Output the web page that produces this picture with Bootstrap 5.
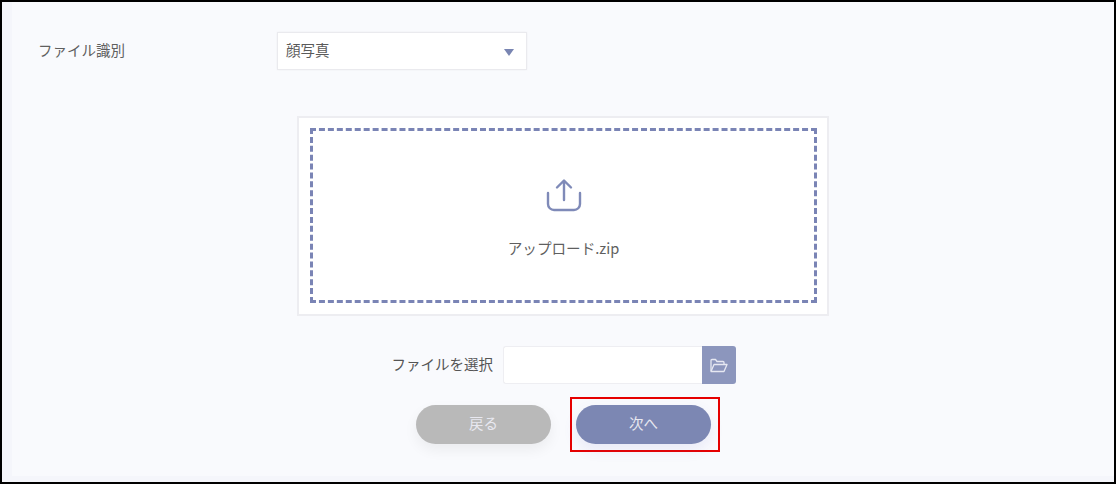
<!DOCTYPE html>
<html lang="ja">
<head>
<meta charset="utf-8">
<title>ファイル識別</title>
<link href="https://cdn.jsdelivr.net/npm/bootstrap@5.3.0/dist/css/bootstrap.min.css" rel="stylesheet">
<style>
html,body{margin:0;height:484px;overflow:hidden;background:#000}
body{font-family:"Noto Sans CJK JP","Noto Sans",sans-serif;color:#555;font-size:14.5px}
.shot-frame{height:484px;border:2px solid #000;background:#f9fafd;position:relative;overflow:hidden;box-shadow:inset 10px 0 0 #f5f6fb,inset 0 -6px 0 #f5f6fb}
.type-row{padding:30px 0 0 36px;height:114px}
.type-label{width:239px;line-height:36px;font-size:14.5px;color:#5f5f5f}
.type-select{width:250px;height:38px;background:#fff;border:1px solid #eaeaee;box-shadow:0 0 2px rgba(0,0,0,.05);padding:0 8px;font-size:14.5px;color:#5a5a5a}
.type-select>span:first-child{line-height:32px;height:34px}
.type-caret{width:0;height:0;border-left:5px solid transparent;border-right:5px solid transparent;border-top:7px solid #7985b2;margin:2px 4px 0 0}
.drop-outer{width:532px;height:200px;margin-left:295px;background:#fff;border:2px solid #ededf1;padding:10px 10px 11px 11px}
.drop-inner{height:100%;border:3.500px dashed #7a84b5;padding-top:47px;text-align:center}
.drop-name{margin-top:25px;font-size:14.6px;line-height:21px;color:#5f5f5f}
.file-row{margin-top:30px;height:38px;margin-left:389px}
.file-label{width:102px;font-size:14.5px;line-height:35px;color:#555}
.file-input{width:199px;height:38px;margin-left:10px;background:#fff;border:1px solid #eeeef2;border-right:0;border-radius:3px 0 0 3px}
.file-btn{width:34px;height:38px;background:#8c96bd;border-radius:0 3px 3px 0;padding:0}
.btn-row{margin:13px 0 0 414px}
.pill-btn{width:135px;height:39px;border-radius:20px;color:#e8e8f0;font-size:14.500px;line-height:36px;padding:0;border:0;text-align:center}
.pill-back{margin-top:8px;background:#b9b9b9;box-shadow:0 6px 14px rgba(0,0,0,.06)}
.pill-next{background:#7c87b3;box-shadow:0 6px 14px rgba(100,100,200,.1)}
.red-mark{margin-left:19px;width:150px;height:55px;border:2px solid #e60000;padding:6px 0 0 4px}
</style>
</head>
<body>
<div class="shot-frame">
  <div class="type-row d-flex align-items-start">
    <div class="type-label">ファイル識別</div>
    <div class="type-select d-flex justify-content-between align-items-center">
      <span>顔写真</span><span class="type-caret"></span>
    </div>
  </div>
  <div class="drop-outer">
    <div class="drop-inner">
      <svg width="36" height="34" viewBox="0 0 36 34" fill="none" stroke="#7f8ab8" stroke-width="2.4" stroke-linecap="round" stroke-linejoin="round" class="d-block mx-auto" aria-hidden="true">
        <path d="M18 22V3M11 9.500 18 2.500l7 7"/>
        <path d="M2 15v11a6 6 0 0 0 6 6h20a6 6 0 0 0 6-6V15"/>
      </svg>
      <div class="drop-name">アップロード.zip</div>
    </div>
  </div>
  <div class="file-row d-flex">
    <div class="file-label text-end">ファイルを選択</div>
    <div class="file-input"></div>
    <div class="file-btn d-flex align-items-center justify-content-center">
      <svg width="18" height="15" viewBox="0 0 18 15" fill="none" stroke="#e6e8f2" stroke-width="1.3" stroke-linejoin="round" aria-hidden="true">
        <path d="M1 13V2.500A1 1 0 0 1 2 1.500h3.500L7 3.500h6a1 1 0 0 1 1 1V6"/>
        <path d="M1 13.500 4 6.500h13l-3 7z"/>
      </svg>
    </div>
  </div>
  <div class="btn-row d-flex align-items-start">
    <div class="pill-btn pill-back">戻る</div>
    <div class="red-mark"><div class="pill-btn pill-next">次へ</div></div>
  </div>
</div>
</body>
</html>
